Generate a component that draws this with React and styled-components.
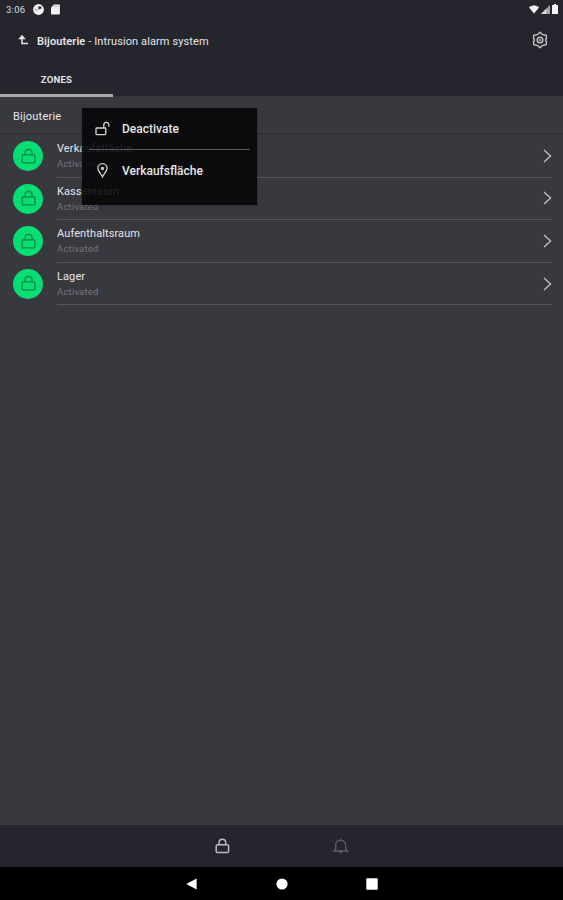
import React from "react";
import styled, { createGlobalStyle } from "styled-components";

const GlobalStyle = createGlobalStyle`
  * { box-sizing: border-box; }
  body { margin: 0; background: #38383f; }
`;

const Screen = styled.div`
  position: relative;
  width: 563px;
  height: 900px;
  display: flex;
  flex-direction: column;
  overflow: hidden;
  background: #38383f;
  color: #e6e6e8;
  font-family: Roboto, "Liberation Sans", sans-serif;
  font-size: 11px;
  line-height: 14px;
  white-space: nowrap;
`;

const StatusBar = styled.div`
  height: 18px;
  flex: none;
  display: flex;
  align-items: center;
  background: #25252d;
  padding: 0 5px 0 6px;
`;

const Clock = styled.span`
  width: 27px;
  padding-top: 1px;
  font-size: 9.5px;
  letter-spacing: 0.25px;
  color: #dcdcdf;
`;

const StatusIcons = styled.div`
  display: flex;
  align-items: center;
  gap: ${(p) => p.$gap}px;
  margin-left: ${(p) => (p.$end ? "auto" : "0")};
`;

const Header = styled.header`
  height: 46px;
  flex: none;
  display: flex;
  align-items: center;
  justify-content: space-between;
  padding: 0 14px 2px 17px;
  background: #25252d;
`;

const Title = styled.div`
  display: flex;
  align-items: center;
  gap: 8px;
  letter-spacing: 0.1px;
`;

const TitleText = styled.span`
  padding-top: 3px;
`;

const Strong = styled.span`
  font-weight: 600;
`;

const Tabs = styled.nav`
  height: 33px;
  flex: none;
  background: linear-gradient(#25252d 32px, #38383f 32px);
`;

const Tab = styled.div`
  width: 113px;
  height: 33px;
  padding-top: 9px;
  text-align: center;
  font-size: 9.5px;
  font-weight: 700;
  letter-spacing: 0.25px;
  border-bottom: 3px solid #a9a9ae;
`;

const SectionHeader = styled.div`
  height: 37px;
  flex: none;
  padding: 13px 13px 0;
  letter-spacing: 0.22px;
  border-bottom: 1px solid #2b2b32;
`;

const List = styled.main`
  flex: 1;
  padding-top: 1px;
`;

const Row = styled.div`
  height: 42.6px;
  display: flex;
  padding-left: 13px;
  padding-right: 11px;
  gap: 14px;
`;

const Badge = styled.div`
  width: 30px;
  height: 30px;
  margin-top: 6px;
  border-radius: 50%;
  background: #06dd72;
  display: flex;
  align-items: center;
  justify-content: center;
`;

const RowBody = styled.div`
  flex: 1;
  display: flex;
  align-items: center;
  justify-content: space-between;
  border-bottom: 1px solid #55555d;
`;

const RowText = styled.div`
  padding-top: 2px;
`;

const RowName = styled.div`
  height: 15px;
  letter-spacing: 0.1px;
`;

const RowState = styled.div`
  font-size: 9.5px;
  letter-spacing: 0.2px;
  color: #74747b;
`;

const Menu = styled.div`
  position: absolute;
  left: 81.5px;
  top: 107.5px;
  width: 175.5px;
  height: 97px;
  padding: 0 7px 0 7.5px;
  background: rgba(5, 5, 7, 0.88);
  box-shadow: 0 1px 3px rgba(0, 0, 0, 0.25);
`;

const MenuItem = styled.div`
  height: 42px;
  display: flex;
  align-items: center;
  gap: 11px;
  padding-left: 5px;
  font-size: 12px;
  font-weight: 500;
  border-bottom: 1px solid ${(p) => (p.$divided ? "#5b5b5e" : "transparent")};
`;

const MenuLabel = styled.span`
  padding-top: 1.5px;
`;

const BottomBar = styled.div`
  height: 42px;
  flex: none;
  display: flex;
  justify-content: center;
  align-items: center;
  gap: 101px;
  padding-right: 1px;
  background: #25252d;
`;

const SystemNav = styled.div`
  height: 33px;
  flex: none;
  display: flex;
  justify-content: center;
  align-items: center;
  gap: 78px;
  background: #000;
`;

const ZoneLockIcon = () => (
  <svg width="17" height="17" viewBox="0 0 17 17" fill="none" stroke="#078844" strokeWidth="1.3">
    <rect x="2.1" y="6.9" width="12.8" height="8" rx="1.2" />
    <path d="M5 6.9V4.8a3.5 3.5 0 0 1 7 0v2.1" />
  </svg>
);

const TabLockIcon = () => (
  <svg width="17" height="17" viewBox="0 0 17 17" fill="none" stroke="#b9b9be" strokeWidth="1.5">
    <rect x="2.2" y="6.8" width="12.4" height="7.8" rx="1.3" />
    <path d="M5.1 6.8V4.6a3.3 3.3 0 0 1 6.6 0v2.2" />
  </svg>
);

const UnlockIcon = () => (
  <svg width="17" height="17" viewBox="0 0 17 17" fill="none" stroke="#d4d4d6" strokeWidth="1.3">
    <rect x="2" y="8" width="9.8" height="6.6" rx="0.8" />
    <path d="M9.8 8V4.8a2.5 2.5 0 0 1 5 0v2" />
  </svg>
);

const PinIcon = () => (
  <svg width="17" height="17" viewBox="0 0 17 17" fill="none" stroke="#d4d4d6" strokeWidth="1.3">
    <path d="M8.5 14.8C7.3 12 3.9 9.4 3.9 6.3a4.6 4.6 0 0 1 9.2 0c0 3.1-3.4 5.7-4.6 8.5Z" />
    <circle cx="8.5" cy="6.5" r="1" />
  </svg>
);

const BackIcon = () => (
  <svg width="12" height="12" viewBox="0 0 12 12" fill="none" stroke="#e2e2e4" strokeWidth="1.6">
    <path d="M5 2.6v6.9h6" />
    <path d="M5 .8 8.8 5.2H1.2Z" fill="#e2e2e4" stroke="none" />
  </svg>
);

const SettingsIcon = () => (
  <svg width="18" height="18" viewBox="0 0 18 18" fill="none" stroke="#c2c2c7" strokeWidth="1.4" strokeLinejoin="round">
    <path d="M9 1.3 11.2 3.3 15.4 4.5V7.6L14.5 9l.9 1.4v3.1l-4.2 1.2L9 16.7l-2.2-2-4.2-1.2v-3.1L3.5 9l-.9-1.4V4.5l4.2-1.2Z" />
    <circle cx="9" cy="9" r="2.8" />
    <path d="M7.8 9h2.4" />
  </svg>
);

const Chevron = () => (
  <svg width="9" height="14" viewBox="0 0 9 14" fill="none" stroke="#c3c3c7" strokeWidth="1.3">
    <path d="m1 1 6.6 6L1 13" />
  </svg>
);

const BellIcon = () => (
  <svg width="17" height="17" viewBox="0 0 17 17" fill="none" stroke="#5c5c64" strokeWidth="1.3">
    <path d="M1.8 13h13.8L13.7 11V7c0-2.7-2-4.6-5-4.6S3.7 4.3 3.7 7v4ZM8.7 2.4V.8M7.5 13.3c.2 1.7 2.2 1.7 2.4 0" />
  </svg>
);

const AppStatusIcon = () => (
  <svg width="11" height="11" viewBox="0 0 11 11">
    <circle cx="5.5" cy="5.5" r="5.4" fill="#f1f1f2" />
    <path d="M5 2.4h3.4v2.4H6.6L5.4 6.4V3.2Z" fill="#25252d" />
    <path d="M1.8 4.6 4 7.6" stroke="#77777d" strokeWidth=".8" />
  </svg>
);

const CardIcon = () => (
  <svg width="9" height="11" viewBox="0 0 9 11">
    <path d="M3 .5h5.2a.7.7 0 0 1 .7.7v8.6a.7.7 0 0 1-.7.7H.7a.7.7 0 0 1-.7-.7V3.5Z" fill="#f1f1f2" />
    <path d="M3.4 1.7v1.3M5.2 1.7v1.3M7 1.7v1.3" stroke="#9b9ba0" strokeWidth=".8" />
  </svg>
);

const WifiIcon = () => (
  <svg width="10" height="9" viewBox="0 0 11 9">
    <path d="M0 2.2C3.2-.5 7.8-.5 11 2.2L5.5 9Z" fill="#f5f5f5" />
  </svg>
);

const SignalIcon = () => (
  <svg width="9" height="9" viewBox="0 0 9 9">
    <path d="M0 9 9 0v9Z" fill="#a2a2a7" />
    <path d="M0 9 5.5 3.5V9Z" fill="#d5d5d7" />
  </svg>
);

const BatteryIcon = () => (
  <svg width="6" height="10" viewBox="0 0 6 10">
    <path d="M2 0h2v1h2v9H0V1h2Z" fill="#f5f5f5" />
  </svg>
);

const NavShape = ({ children }) => (
  <svg width="12" height="12" viewBox="0 0 12 12" fill="#fff">
    {children}
  </svg>
);

const zones = ["Verkaufsfläche", "Kassenraum", "Aufenthaltsraum", "Lager"];

export default function App() {
  return (
    <>
      <GlobalStyle />
      <Screen>
        <StatusBar>
          <Clock>3:06</Clock>
          <StatusIcons $gap={7}>
            <AppStatusIcon />
            <CardIcon />
          </StatusIcons>
          <StatusIcons $gap={2} $end>
            <WifiIcon />
            <SignalIcon />
            <BatteryIcon />
          </StatusIcons>
        </StatusBar>
        <Header>
          <Title>
            <BackIcon />
            <TitleText>
              <Strong>Bijouterie</Strong> - Intrusion alarm system
            </TitleText>
          </Title>
          <SettingsIcon />
        </Header>
        <Tabs>
          <Tab>ZONES</Tab>
        </Tabs>
        <SectionHeader>Bijouterie</SectionHeader>
        <List>
          {zones.map((zone) => (
            <Row key={zone}>
              <Badge>
                <ZoneLockIcon />
              </Badge>
              <RowBody>
                <RowText>
                  <RowName>{zone}</RowName>
                  <RowState>Activated</RowState>
                </RowText>
                <Chevron />
              </RowBody>
            </Row>
          ))}
        </List>
        <BottomBar>
          <TabLockIcon />
          <BellIcon />
        </BottomBar>
        <SystemNav>
          <NavShape>
            <path d="M.3 6 10.6 .5v11Z" />
          </NavShape>
          <NavShape>
            <circle cx="6" cy="6" r="5.6" />
          </NavShape>
          <NavShape>
            <rect x=".3" y=".3" width="11.4" height="11.4" rx=".5" />
          </NavShape>
        </SystemNav>
        <Menu>
          <MenuItem $divided>
            <UnlockIcon />
            <MenuLabel>Deactivate</MenuLabel>
          </MenuItem>
          <MenuItem>
            <PinIcon />
            <MenuLabel>Verkaufsfläche</MenuLabel>
          </MenuItem>
        </Menu>
      </Screen>
    </>
  );
}
